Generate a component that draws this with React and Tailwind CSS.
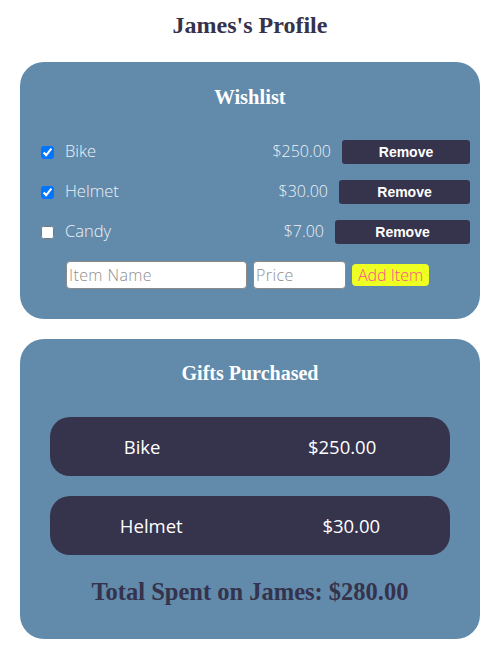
import {useState} from "react";

const wishlist = [
    {name: "Bike", price: "$250.00", bought: true, btn: "w-[128px]"},
    {name: "Helmet", price: "$30.00", bought: true, btn: "w-[131px]"},
    {name: "Candy", price: "$7.00", bought: false, btn: "w-[135px]"},
];

const gifts = [
    {name: "Bike", price: "$250.00"},
    {name: "Helmet", price: "$30.00"},
];

export default function App() {
    const [items, setItems] = useState(wishlist);

    const toggle = (i) => {
        setItems(items.map((it, idx) => (idx === i ? {...it, bought: !it.bought} : it)));
    };

    return (
        <div className="w-[500px] min-h-[658px] bg-white flex flex-col items-center pt-[9px]">
            <h1 className="text-[24px] leading-[32px] font-bold text-[#35324b] font-['Liberation_Serif',serif]">
                James's Profile
            </h1>

            <div className="mt-[21px] w-[460px] bg-[#618aab] rounded-[24px] pt-[21px] pb-[30px] flex flex-col">
                <h2 className="text-center text-[20.5px] leading-[28px] font-bold text-white font-['Liberation_Serif',serif]">
                    Wishlist
                </h2>
                <div className="mt-[29px] flex flex-col gap-[16px] pl-[20px] pr-[10px]">
                    {items.map((it, i) => (
                        <div key={it.name} className="flex items-center h-[24px]">
                            <input
                                type="checkbox"
                                checked={it.bought}
                                onChange={() => toggle(i)}
                                className="w-[13px] h-[13px] m-0 ml-[1px]"
                            />
                            <span className="ml-[11px] -mt-[2px] text-[16.5px] font-light text-[#eef2f7] font-['Open_Sans',sans-serif]">
                                {it.name}
                            </span>
                            <span className="flex-1 -mt-[2px] text-right text-[16px] font-light text-[#eef2f7] font-['Open_Sans',sans-serif]">
                                {it.price}
                            </span>
                            <button className={`${it.btn} ml-[11px] h-[24px] bg-[#36334d] text-white text-[14px] font-bold rounded-[3px] font-['Liberation_Sans',Arial,sans-serif]`}>
                                Remove
                            </button>
                        </div>
                    ))}
                </div>
                <div className="mt-[17px] flex items-center pl-[46px] gap-[6px]">
                    <input
                        placeholder="Item Name"
                        className="w-[181px] h-[28px] bg-white border border-[#8a8a8a] rounded-[4px] px-[2px] text-[16px] tracking-wide font-light placeholder:text-[#8e8e8e] font-['Open_Sans',sans-serif]"
                    />
                    <input
                        placeholder="Price"
                        className="w-[93px] h-[28px] bg-white border border-[#8a8a8a] rounded-[4px] px-[2px] text-[16px] tracking-wide font-light placeholder:text-[#8e8e8e] font-['Open_Sans',sans-serif]"
                    />
                    <button className="w-[77px] h-[22px] bg-[#eeff22] text-[#ff4f8f] text-[16px] font-light rounded-[4px] leading-none font-['Open_Sans',sans-serif]">
                        Add Item
                    </button>
                </div>
            </div>

            <div className="mt-[20px] w-[460px] bg-[#618aab] rounded-[24px] pt-[21px] pb-[32px] flex flex-col items-center">
                <h2 className="text-[20px] leading-[26px] font-bold text-white font-['Liberation_Serif',serif]">
                    Gifts Purchased
                </h2>
                <div className="mt-[31px] flex flex-col gap-[20px] w-[400px]">
                    {gifts.map((g) => (
                        <div
                            key={g.name}
                            className="h-[59px] bg-[#36334d] rounded-[20px] flex items-center justify-around text-white text-[18.5px] font-['Open_Sans',sans-serif]"
                        >
                            <span>{g.name}</span>
                            <span>{g.price}</span>
                        </div>
                    ))}
                </div>
                <p className="mt-[22px] text-[24.5px] leading-[30px] font-bold text-[#35324b] font-['Liberation_Serif',serif]">
                    Total Spent on James: $280.00
                </p>
            </div>
        </div>
    );
}
